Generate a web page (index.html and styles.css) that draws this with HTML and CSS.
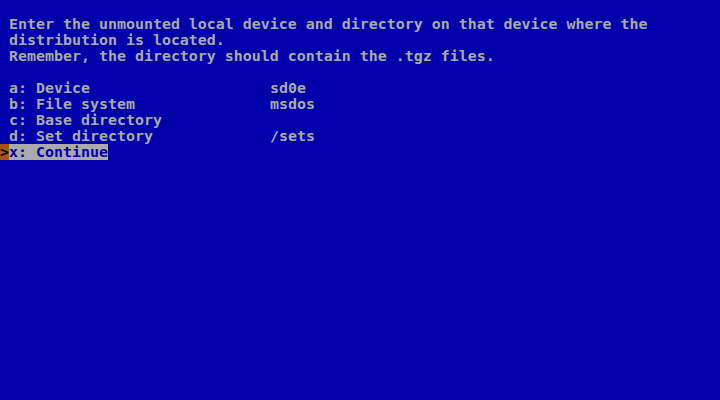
FILE: index.html
```html
<!DOCTYPE html>
<html>
<head>
<meta charset="utf-8">
<link rel="stylesheet" href="styles.css">
</head>
<body>
<div class="screen">
  <div class="msg">
    <div class="line">Enter the unmounted local device and directory on that device where the</div>
    <div class="line">distribution is located.</div>
    <div class="line">Remember, the directory should contain the .tgz files.</div>
  </div>
  <div class="menu">
    <div class="row"><span class="cursor"></span><span class="label">a: Device</span><span class="value">sd0e</span></div>
    <div class="row"><span class="cursor"></span><span class="label">b: File system</span><span class="value">msdos</span></div>
    <div class="row"><span class="cursor"></span><span class="label">c: Base directory</span><span class="value"></span></div>
    <div class="row"><span class="cursor"></span><span class="label">d: Set directory</span><span class="value">/sets</span></div>
    <div class="row selected"><span class="cursor active">&gt;</span><span class="label"><span class="hl">x: Continue</span></span><span class="value"></span></div>
  </div>
</div>
</body>
</html>
```

FILE: styles.css
```css
html, body {
  margin: 0;
  padding: 0;
  background: #0000aa;
  width: 720px;
  height: 400px;
  overflow: hidden;
}
.screen {
  padding-top: 16px;
  color: #aaaaaa;
  font-family: "DejaVu Sans Mono", "Liberation Mono", monospace;
  font-weight: bold;
  font-size: 14.95px;
  line-height: 16px;
}
.msg {
  padding-left: 9px;
}
.line {
  height: 16px;
  white-space: pre;
}
.menu {
  margin-top: 16px;
  display: flex;
  flex-direction: column;
}
.row {
  display: grid;
  grid-template-columns: 9px 261px auto;
  height: 16px;
}
.label, .value {
  white-space: pre;
  height: 16px;
}
.cursor {
  display: block;
  width: 9px;
  height: 16px;
}
.cursor.active {
  background: #aa5500;
  color: #000000;
}
.hl {
  background: #aaaaaa;
  color: #0000aa;
  display: inline-block;
  height: 16px;
}
```
